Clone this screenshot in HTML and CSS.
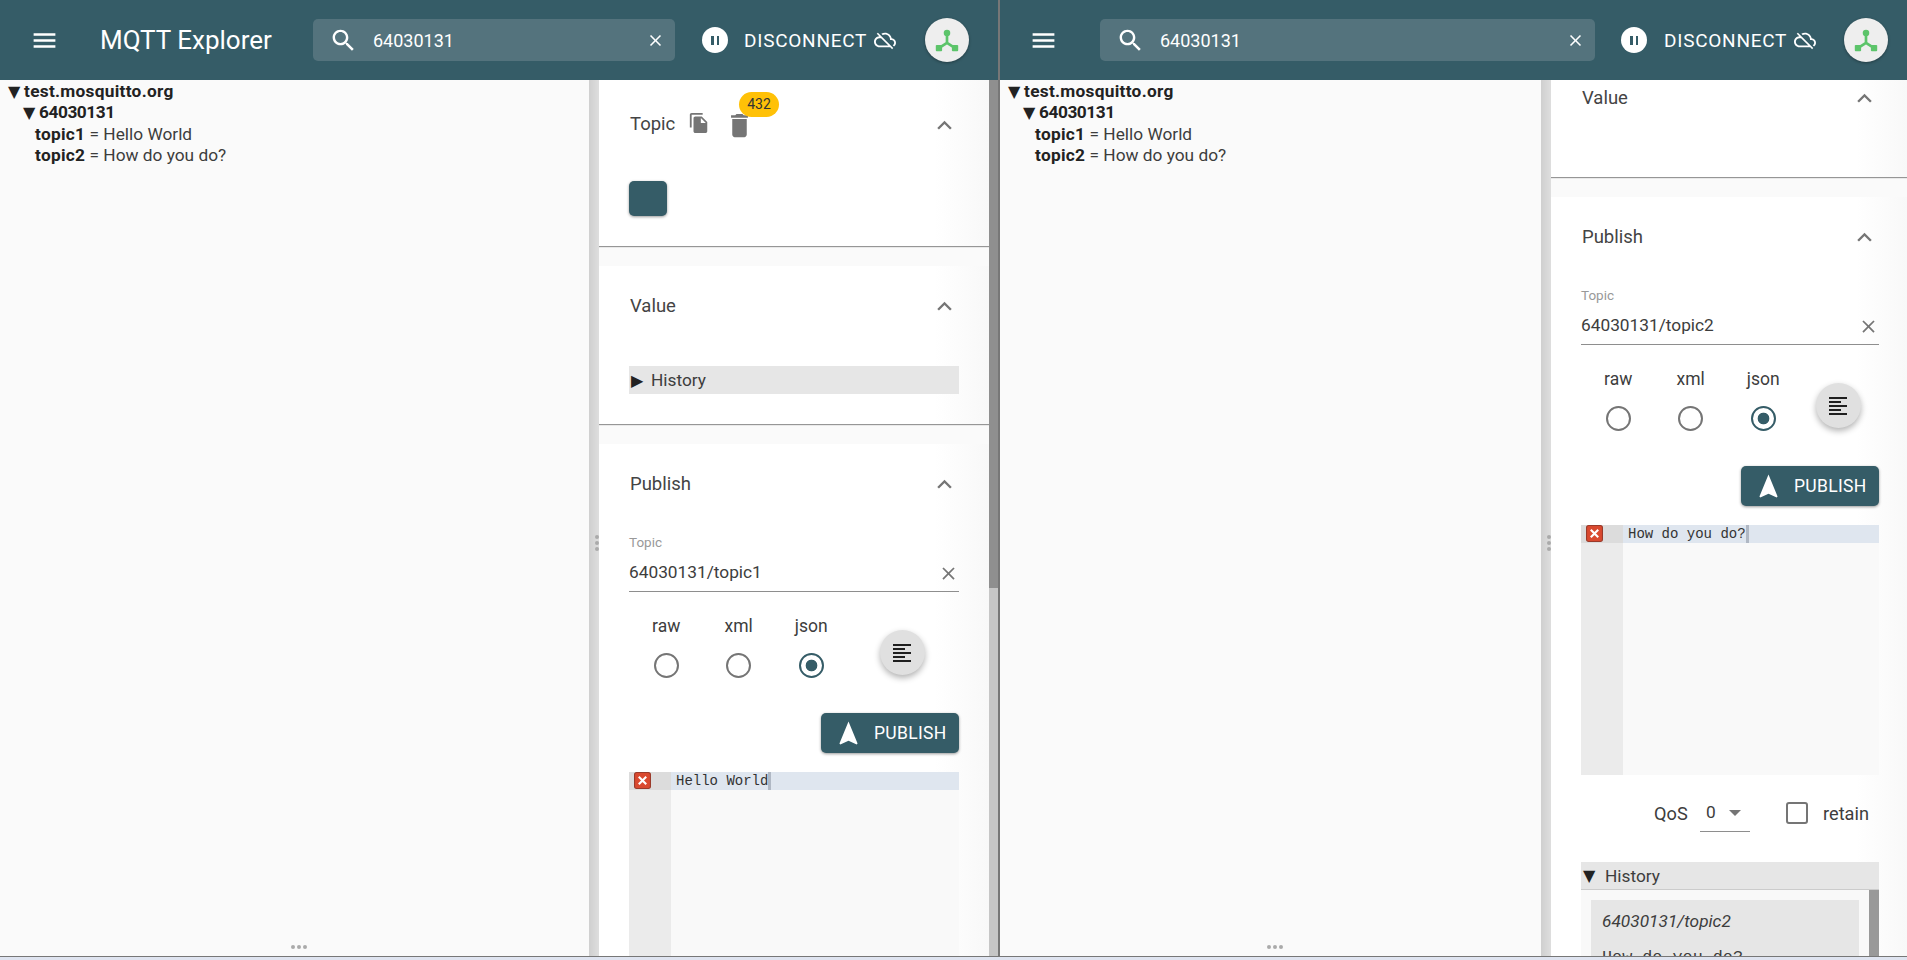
FILE: index.html
```html
<!DOCTYPE html>
<html lang="en">
<head>
    <meta charset="UTF-8">
    <meta name="viewport" content="width=device-width, initial-scale=1.0">
    <title>MQTT Explorer</title>
    <link rel="stylesheet" href="styles.css">
</head>
<body>
    <div class="desktop">
        <!-- first window -->
        <div class="window window-left">
            <header class="appbar">
                <svg class="menu-icon" viewBox="0 0 24 24"><path d="M3 18h18v-2H3v2zm0-5h18v-2H3v2zm0-7v2h18V6H3z"/></svg>
                <div class="app-title">MQTT Explorer</div>
                <div class="search">
                    <svg class="search-icon" viewBox="0 0 24 24"><path d="M15.5 14h-.79l-.28-.27C15.41 12.59 16 11.11 16 9.5 16 5.91 13.09 3 9.5 3S3 5.91 3 9.5 5.91 16 9.5 16c1.61 0 3.09-.59 4.23-1.57l.27.28v.79l5 4.99L20.49 19l-4.99-5zm-6 0C7.01 14 5 11.99 5 9.5S7.01 5 9.5 5 14 7.01 14 9.5 11.99 14 9.5 14z"/></svg>
                    <span class="search-text">64030131</span>
                    <svg class="search-clear" viewBox="0 0 24 24"><path d="M19 6.41L17.59 5 12 10.59 6.41 5 5 6.41 10.59 12 5 17.59 6.41 19 12 13.41 17.59 19 19 17.59 13.41 12z"/></svg>
                </div>
                <div class="pause"><span></span><span></span></div>
                <div class="disconnect">DISCONNECT</div>
                <svg class="cloud-icon" viewBox="0 0 24 24"><path d="M19.35 10.04C18.67 6.59 15.64 4 12 4c-1.48 0-2.85.43-4.01 1.17l1.46 1.46C10.21 6.23 11.08 6 12 6c3.04 0 5.5 2.46 5.5 5.5v.5H19c1.66 0 3 1.34 3 3 0 1.13-.64 2.11-1.56 2.62l1.45 1.45C23.16 18.16 24 16.68 24 15c0-2.64-2.05-4.78-4.65-4.96zM3 5.27l2.75 2.74C2.56 8.15 0 10.77 0 14c0 3.31 2.69 6 6 6h11.73l2 2L21 20.73 4.27 4 3 5.27zM7.73 10l8 8H6c-2.21 0-4-1.79-4-4s1.79-4 4-4h1.73z"/></svg>
                <div class="avatar">
                    <svg viewBox="0 0 24 24"><circle cx="12" cy="6" r="2.8"/><rect x="2.4" y="16.2" width="5.4" height="5.4" rx="0.8"/><rect x="16.2" y="16.2" width="5.4" height="5.4" rx="0.8"/><path class="avatar-line" d="M12 6v8.5M12 14.5L5 19M12 14.5L19 19"/></svg>
                </div>
            </header>
            <div class="main">
                <div class="tree">
                    <div class="tree-row tree-root"><span class="arrow">▼</span><b>test.mosquitto.org</b></div>
                    <div class="tree-row tree-branch"><span class="arrow">▼</span><b>64030131</b></div>
                    <div class="tree-row tree-leaf"><b>topic1</b> = Hello World</div>
                    <div class="tree-row tree-leaf"><b>topic2</b> = How do you do?</div>
                    <div class="grip-h"><i></i><i></i><i></i></div>
                </div>
                <div class="gutter"><div class="grip-v"><i></i><i></i><i></i></div></div>
                <div class="panel">
                    <section class="card card-topic">
                        <div class="card-head">
                            <span class="card-title">Topic</span>
                            <svg class="tool-icon copy-icon" viewBox="0 0 24 24"><path d="M16 1H4c-1.1 0-2 .9-2 2v14h2V3h12V1zm-1 4l6 6v10c0 1.1-.9 2-2 2H7.99C6.89 23 6 22.1 6 21l.01-14c0-1.1.89-2 1.99-2h7zm-1 7h5.5L14 6.5V12z"/></svg>
                            <svg class="tool-icon trash-icon" viewBox="0 0 24 24" preserveAspectRatio="none"><path d="M6 19c0 1.1.9 2 2 2h8c1.1 0 2-.9 2-2V7H6v12zM19 4h-3.5l-1-1h-5l-1 1H5v2h14V4z"/></svg>
                            <span class="badge">432</span>
                            <svg class="chevron" viewBox="0 0 24 24"><path d="M7.41 15.41L12 10.83l4.59 4.58L18 14l-6-6-6 6z"/></svg>
                        </div>
                        <div class="topic-square"></div>
                    </section>
                    <section class="card card-value">
                        <div class="card-head">
                            <span class="card-title">Value</span>
                            <svg class="chevron" viewBox="0 0 24 24"><path d="M7.41 15.41L12 10.83l4.59 4.58L18 14l-6-6-6 6z"/></svg>
                        </div>
                        <div class="history-bar"><span class="history-arrow">▶</span>History</div>
                    </section>
                    <section class="card card-publish">
                        <div class="card-head">
                            <span class="card-title">Publish</span>
                            <svg class="chevron" viewBox="0 0 24 24"><path d="M7.41 15.41L12 10.83l4.59 4.58L18 14l-6-6-6 6z"/></svg>
                        </div>
                        <div class="field-label">Topic</div>
                        <div class="field">
                            <span>64030131/topic1</span>
                            <svg class="field-clear" viewBox="0 0 24 24"><path d="M19 6.41L17.59 5 12 10.59 6.41 5 5 6.41 10.59 12 5 17.59 6.41 19 12 13.41 17.59 19 19 17.59 13.41 12z"/></svg>
                        </div>
                        <div class="format-row">
                            <div class="radios">
                                <div class="radio-item"><span>raw</span><i class="radio"></i></div>
                                <div class="radio-item"><span>xml</span><i class="radio"></i></div>
                                <div class="radio-item"><span>json</span><i class="radio checked"></i></div>
                            </div>
                            <div class="fab-wrap">
                                <div class="fab"><svg viewBox="0 0 24 24"><path d="M3 21h18v-2H3v2zm0-4h12v-2H3v2zm0-4h18v-2H3v2zm0-4h12V7H3v2zm0-6v2h18V3H3z"/></svg></div>
                            </div>
                        </div>
                        <div class="publish-row">
                            <div class="publish-btn">
                                <svg viewBox="0 0 24 24"><path d="M12 2L4.5 20.29l.71.71L12 18l6.79 3 .71-.71z"/></svg>
                                <span>PUBLISH</span>
                            </div>
                        </div>
                        <div class="editor">
                            <div class="editor-gutter">
                                <div class="editor-gutter-active"><svg class="error-icon" viewBox="0 0 16 16"><rect x="0.5" y="0.5" width="15" height="15" rx="2"/><path d="M4.5 4.5l7 7M11.5 4.5l-7 7"/></svg></div>
                            </div>
                            <div class="editor-body">
                                <div class="editor-line"><span>Hello World</span><i class="cursor"></i></div>
                            </div>
                        </div>
                    </section>
                </div>
                <div class="scrollbar"><div class="thumb"></div></div>
            </div>
        </div>

        <!-- second window -->
        <div class="window window-right">
            <header class="appbar">
                <svg class="menu-icon" viewBox="0 0 24 24"><path d="M3 18h18v-2H3v2zm0-5h18v-2H3v2zm0-7v2h18V6H3z"/></svg>
                <div class="search">
                    <svg class="search-icon" viewBox="0 0 24 24"><path d="M15.5 14h-.79l-.28-.27C15.41 12.59 16 11.11 16 9.5 16 5.91 13.09 3 9.5 3S3 5.91 3 9.5 5.91 16 9.5 16c1.61 0 3.09-.59 4.23-1.57l.27.28v.79l5 4.99L20.49 19l-4.99-5zm-6 0C7.01 14 5 11.99 5 9.5S7.01 5 9.5 5 14 7.01 14 9.5 11.99 14 9.5 14z"/></svg>
                    <span class="search-text">64030131</span>
                    <svg class="search-clear" viewBox="0 0 24 24"><path d="M19 6.41L17.59 5 12 10.59 6.41 5 5 6.41 10.59 12 5 17.59 6.41 19 12 13.41 17.59 19 19 17.59 13.41 12z"/></svg>
                </div>
                <div class="pause"><span></span><span></span></div>
                <div class="disconnect">DISCONNECT</div>
                <svg class="cloud-icon" viewBox="0 0 24 24"><path d="M19.35 10.04C18.67 6.59 15.64 4 12 4c-1.48 0-2.85.43-4.01 1.17l1.46 1.46C10.21 6.23 11.08 6 12 6c3.04 0 5.5 2.46 5.5 5.5v.5H19c1.66 0 3 1.34 3 3 0 1.13-.64 2.11-1.56 2.62l1.45 1.45C23.16 18.16 24 16.68 24 15c0-2.64-2.05-4.78-4.65-4.96zM3 5.27l2.75 2.74C2.56 8.15 0 10.77 0 14c0 3.31 2.69 6 6 6h11.73l2 2L21 20.73 4.27 4 3 5.27zM7.73 10l8 8H6c-2.21 0-4-1.79-4-4s1.79-4 4-4h1.73z"/></svg>
                <div class="avatar">
                    <svg viewBox="0 0 24 24"><circle cx="12" cy="6" r="2.8"/><rect x="2.4" y="16.2" width="5.4" height="5.4" rx="0.8"/><rect x="16.2" y="16.2" width="5.4" height="5.4" rx="0.8"/><path class="avatar-line" d="M12 6v8.5M12 14.5L5 19M12 14.5L19 19"/></svg>
                </div>
            </header>
            <div class="main">
                <div class="tree">
                    <div class="tree-row tree-root"><span class="arrow">▼</span><b>test.mosquitto.org</b></div>
                    <div class="tree-row tree-branch"><span class="arrow">▼</span><b>64030131</b></div>
                    <div class="tree-row tree-leaf"><b>topic1</b> = Hello World</div>
                    <div class="tree-row tree-leaf"><b>topic2</b> = How do you do?</div>
                    <div class="grip-h"><i></i><i></i><i></i></div>
                </div>
                <div class="gutter"><div class="grip-v"><i></i><i></i><i></i></div></div>
                <div class="panel">
                    <section class="card card-value card-scrolled">
                        <div class="card-head">
                            <span class="card-title">Value</span>
                            <svg class="chevron" viewBox="0 0 24 24"><path d="M7.41 15.41L12 10.83l4.59 4.58L18 14l-6-6-6 6z"/></svg>
                        </div>
                    </section>
                    <section class="card card-publish">
                        <div class="card-head">
                            <span class="card-title">Publish</span>
                            <svg class="chevron" viewBox="0 0 24 24"><path d="M7.41 15.41L12 10.83l4.59 4.58L18 14l-6-6-6 6z"/></svg>
                        </div>
                        <div class="field-label">Topic</div>
                        <div class="field">
                            <span>64030131/topic2</span>
                            <svg class="field-clear" viewBox="0 0 24 24"><path d="M19 6.41L17.59 5 12 10.59 6.41 5 5 6.41 10.59 12 5 17.59 6.41 19 12 13.41 17.59 19 19 17.59 13.41 12z"/></svg>
                        </div>
                        <div class="format-row">
                            <div class="radios">
                                <div class="radio-item"><span>raw</span><i class="radio"></i></div>
                                <div class="radio-item"><span>xml</span><i class="radio"></i></div>
                                <div class="radio-item"><span>json</span><i class="radio checked"></i></div>
                            </div>
                            <div class="fab-wrap">
                                <div class="fab"><svg viewBox="0 0 24 24"><path d="M3 21h18v-2H3v2zm0-4h12v-2H3v2zm0-4h18v-2H3v2zm0-4h12V7H3v2zm0-6v2h18V3H3z"/></svg></div>
                            </div>
                        </div>
                        <div class="publish-row">
                            <div class="publish-btn">
                                <svg viewBox="0 0 24 24"><path d="M12 2L4.5 20.29l.71.71L12 18l6.79 3 .71-.71z"/></svg>
                                <span>PUBLISH</span>
                            </div>
                        </div>
                        <div class="editor">
                            <div class="editor-gutter">
                                <div class="editor-gutter-active"><svg class="error-icon" viewBox="0 0 16 16"><rect x="0.5" y="0.5" width="15" height="15" rx="2"/><path d="M4.5 4.5l7 7M11.5 4.5l-7 7"/></svg></div>
                            </div>
                            <div class="editor-body">
                                <div class="editor-line"><span>How do you do?</span><i class="cursor"></i></div>
                            </div>
                        </div>
                        <div class="options-row">
                            <span class="qos-label">QoS</span>
                            <div class="qos-select"><span>0</span><i class="caret"></i></div>
                            <i class="checkbox"></i>
                            <span class="retain-label">retain</span>
                        </div>
                        <div class="history-bar history-open"><span class="history-arrow">▼</span>History</div>
                        <div class="history-list">
                            <div class="history-item">
                                <div class="history-topic">64030131/topic2</div>
                                <div class="history-value">How do you do?</div>
                            </div>
                            <div class="history-scroll"></div>
                        </div>
                    </section>
                </div>
            </div>
        </div>
    </div>
    <div class="taskbar-edge"></div>
</body>
</html>
```

FILE: styles.css
```css
* {
    box-sizing: border-box;
}
html, body {
    height: 100%;
}
body {
    margin: 0;
    overflow: hidden;
    font-family: Roboto, "Liberation Sans", sans-serif;
    font-size: 18px;
    color: #3d3d3d;
    background-color: #dfe4f0;
}
.desktop {
    display: flex;
    height: 956px;
}
.window {
    display: flex;
    flex-direction: column;
    height: 100%;
    overflow: hidden;
}
.window-left {
    width: 1000px;
    border-right: 2px solid #777;
}
.window-right {
    width: 907px;
}
.taskbar-edge {
    height: 1px;
    background-color: #777;
}

/* app bar */
.appbar {
    display: flex;
    align-items: center;
    flex: 0 0 80px;
    color: #fff;
    background-color: #355c67;
}
.menu-icon {
    flex: none;
    width: 29px;
    height: 29px;
    margin-left: 30px;
    fill: #fff;
}
.app-title {
    flex: none;
    width: 213px;
    margin-left: 41px;
    font-size: 26px;
}
.window-right .menu-icon {
    margin-left: 29px;
}
.search {
    display: flex;
    align-items: center;
    flex: none;
    height: 42px;
    padding: 0 10px 0 16px;
    border-radius: 5px;
    background-color: #54737d;
}
.window-left .search {
    width: 362px;
}
.window-right .search {
    width: 495px;
    margin-left: 42px;
}
.search-icon {
    flex: none;
    width: 29px;
    height: 29px;
    fill: #fff;
}
.search-text {
    flex: 1;
    margin-left: 15px;
    font-size: 18px;
}
.search-clear {
    flex: none;
    width: 19px;
    height: 19px;
    fill: #fff;
}
.pause {
    display: flex;
    justify-content: center;
    align-items: center;
    gap: 3px;
    flex: none;
    width: 26px;
    height: 26px;
    margin-left: 27px;
    border-radius: 50%;
    background-color: #fff;
}
.window-right .pause {
    margin-left: 26px;
}
.pause span {
    width: 2.5px;
    height: 9px;
    background-color: #355c67;
}
.disconnect {
    flex: none;
    width: 121px;
    margin-left: 16px;
    font-size: 19px;
    letter-spacing: 0.75px;
    white-space: nowrap;
}
.window-right .disconnect {
    margin-left: 17px;
}
.cloud-icon {
    flex: none;
    width: 22px;
    height: 22px;
    margin-left: 9px;
    fill: #fff;
}
.avatar {
    display: flex;
    justify-content: center;
    align-items: center;
    flex: none;
    width: 44px;
    height: 44px;
    margin-left: 29px;
    border-radius: 50%;
    background-color: #eee;
    box-shadow: 0 1px 3px rgba(0, 0, 0, 0.35);
}
.window-right .avatar {
    margin-left: 28px;
}
.avatar svg {
    width: 28px;
    height: 28px;
    fill: #5cc46a;
}
.avatar-line {
    fill: none;
    stroke: #5cc46a;
    stroke-width: 2.3;
}

/* layout under the bar */
.main {
    display: flex;
    flex: 1;
    min-height: 0;
}
.tree {
    position: relative;
    flex: 1;
    padding-top: 1px;
    font-size: 17.3px;
    background-color: #fafafa;
}
.tree-row {
    height: 21.3px;
    line-height: 21.3px;
    white-space: nowrap;
}
.tree-row b {
    font-weight: 700;
    letter-spacing: 0.28px;
    color: #222;
}
.tree-branch b {
    letter-spacing: -0.45px;
}
.arrow {
    display: inline-block;
    width: 16px;
    font-family: "DejaVu Sans", sans-serif;
    font-size: 16px;
    line-height: 1;
    color: #222;
}
.tree-root {
    padding-left: 8px;
}
.tree-branch {
    padding-left: 23px;
}
.tree-leaf {
    padding-left: 35px;
}
.grip-h {
    position: absolute;
    bottom: 7px;
    left: 291px;
    display: flex;
    gap: 2px;
}
.window-right .grip-h {
    left: 267px;
}
.grip-h i, .grip-v i {
    width: 4px;
    height: 4px;
    border-radius: 50%;
    background-color: #aaa;
}
.gutter {
    display: flex;
    align-items: center;
    justify-content: flex-end;
    flex: 0 0 10px;
    background: linear-gradient(to right, #cfcfcf, #dedede);
}
.grip-v {
    display: flex;
    flex-direction: column;
    gap: 2px;
    margin-top: 49px;
}
.panel {
    flex: none;
    display: flex;
    flex-direction: column;
    overflow: hidden;
    background-color: #fafafa;
}
.window-left .panel {
    width: 390px;
}
.window-right .panel {
    width: 356px;
}
.scrollbar {
    flex: 0 0 9px;
    background-color: #c6c6c6;
}
.thumb {
    height: 508px;
    background-color: #8f8f8f;
}

/* cards */
.card {
    flex: none;
    padding: 0 30px;
    margin-bottom: 20px;
    background: linear-gradient(to right, #fff 86%, #f8f8f8);
    box-shadow: 0 1px 1px rgba(0, 0, 0, 0.4);
}
.window-right .card {
    padding: 0 28px 0 30px;
}
.card-head {
    position: relative;
    display: flex;
    align-items: center;
    height: 78px;
    padding-top: 2px;
}
.card-title {
    margin-left: 1px;
    font-size: 18.5px;
    color: #444;
}
.chevron {
    position: absolute;
    right: 0.5px;
    top: 26px;
    width: 29px;
    height: 29px;
    fill: #757575;
}
.card-topic {
    height: 166px;
}
.card-topic .card-head {
    height: 86px;
}
.card-topic .chevron {
    top: 31px;
}
.tool-icon {
    position: absolute;
    fill: #757575;
}
.copy-icon {
    left: 59px;
    top: 32px;
    width: 22px;
    height: 22px;
}
.trash-icon {
    left: 95.5px;
    top: 29.5px;
    width: 29px;
    height: 31px;
}
.badge {
    position: absolute;
    left: 110px;
    top: 12px;
    width: 40px;
    height: 25px;
    border-radius: 13px;
    font-size: 14px;
    line-height: 25px;
    text-align: center;
    color: #333;
    background-color: #ffc107;
}
.topic-square {
    width: 38px;
    height: 35px;
    margin-top: 15px;
    border-radius: 5px;
    background-color: #355c67;
    box-shadow: 0 1px 3px rgba(0, 0, 0, 0.4);
}
.card-value {
    height: 158px;
}
.card-value .history-bar {
    margin-top: 22px;
}
.card-scrolled {
    height: 119px;
    margin-top: -22px;
}
.history-bar {
    display: flex;
    align-items: center;
    height: 28px;
    padding-left: 2px;
    font-size: 17.3px;
    background-color: #e6e6e6;
}
.history-arrow {
    width: 20px;
    font-family: "DejaVu Sans", sans-serif;
    font-size: 16px;
    color: #222;
}

/* publish form */
.card-publish {
    margin-bottom: 0;
}
.field-label {
    margin-top: 12px;
    font-size: 13.5px;
    line-height: 16px;
    color: #999;
}
.field {
    position: relative;
    display: flex;
    align-items: center;
    height: 39px;
    margin-top: 3px;
    border-bottom: 1px solid #8e8e8e;
    font-size: 17.3px;
}
.field-clear {
    position: absolute;
    right: 0;
    top: 10px;
    width: 21px;
    height: 21px;
    fill: #757575;
}
.format-row {
    display: flex;
    margin-top: 22px;
}
.radios {
    display: flex;
    flex: 0 0 216px;
    min-width: 0;
    padding-left: 13px;
}
.radio-item {
    display: flex;
    flex: none;
    flex-direction: column;
    align-items: center;
    width: 72.5px;
    margin-left: -12px;
    margin-right: 12px;
    font-size: 17.5px;
    line-height: 24px;
}
.radio {
    width: 25px;
    height: 25px;
    margin-top: 15px;
    border: 2.5px solid #757575;
    border-radius: 50%;
}
.radio.checked {
    border-color: #355c67;
    background: radial-gradient(circle, #355c67 0, #355c67 5.5px, transparent 6.2px);
}
.fab-wrap {
    display: flex;
    justify-content: center;
    flex: 1;
}
.fab {
    display: flex;
    justify-content: center;
    align-items: center;
    width: 45px;
    height: 45px;
    margin-top: 16px;
    border-radius: 50%;
    background-color: #e0e0e0;
    box-shadow: 0 3px 6px rgba(0, 0, 0, 0.3);
}
.fab svg {
    width: 24px;
    height: 24px;
    fill: #1f1f1f;
}
.publish-row {
    display: flex;
    justify-content: flex-end;
    margin-top: 35px;
}
.publish-btn {
    display: flex;
    align-items: center;
    width: 138px;
    height: 40px;
    padding-left: 13px;
    border-radius: 5px;
    font-size: 17.5px;
    letter-spacing: 0.3px;
    color: #fff;
    background-color: #355c67;
    box-shadow: 0 1px 3px rgba(0, 0, 0, 0.4);
}
.publish-btn svg {
    width: 29px;
    height: 29px;
    fill: #fff;
}
.publish-btn span {
    margin-left: 11px;
}

/* code editor */
.editor {
    display: flex;
    height: 250px;
    margin-top: 19px;
    font-family: "Liberation Mono", monospace;
    font-size: 14px;
    color: #333;
    background-color: #f9f9f9;
}
.editor-gutter {
    flex: 0 0 42px;
    background-color: #ebebeb;
}
.editor-gutter-active {
    display: flex;
    align-items: center;
    height: 17.5px;
    padding-left: 5px;
    background-color: #dcdcdc;
}
.error-icon {
    width: 17px;
    height: 17px;
}
.error-icon rect {
    fill: #d9492f;
    stroke: #9a3a2a;
}
.error-icon path {
    fill: none;
    stroke: #fff;
    stroke-width: 2;
}
.editor-body {
    flex: 1;
}
.editor-line {
    display: flex;
    height: 17.5px;
    padding-left: 5px;
    line-height: 19.5px;
    white-space: pre;
    background-color: #dfe6ef;
}
.cursor {
    width: 3px;
    background-color: #b0b8c4;
}

/* qos and history */
.options-row {
    display: flex;
    align-items: center;
    height: 56px;
    margin-top: 10px;
    font-size: 18.2px;
}
.qos-label {
    flex: none;
    width: 37px;
    margin-left: 73px;
}
.qos-select {
    position: relative;
    width: 50px;
    height: 38px;
    margin-left: 9px;
    padding-left: 6px;
    font-size: 17.3px;
    line-height: 37px;
    border-bottom: 1px solid #8e8e8e;
}
.caret {
    position: absolute;
    right: 9px;
    top: 16px;
    border-left: 6px solid transparent;
    border-right: 6px solid transparent;
    border-top: 6px solid #757575;
}
.checkbox {
    width: 22px;
    height: 22px;
    margin-left: 36px;
    border: 2.5px solid #757575;
    border-radius: 3px;
}
.retain-label {
    margin-left: 15px;
}
.history-open {
    margin-top: 21px;
    border-bottom: 1px solid #ccc;
}
.history-open .history-arrow {
    width: 22px;
}
.history-list {
    position: relative;
    padding: 10px 20px 0 10px;
    background-color: #f9f9f9;
}
.history-item {
    height: 80px;
    padding: 10px 11px 0;
    background-color: #e6e6e6;
}
.history-topic {
    font-size: 17.3px;
    font-style: italic;
    line-height: 22px;
}
.history-value {
    margin-top: 16px;
    font-family: "Liberation Mono", monospace;
    font-size: 16.8px;
}
.history-scroll {
    position: absolute;
    top: 0;
    right: 0;
    width: 10px;
    height: 100%;
    background-color: #999;
}
```
